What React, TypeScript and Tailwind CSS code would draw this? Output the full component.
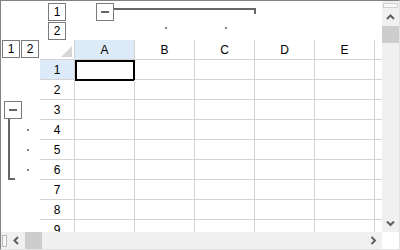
import React from 'react';

const columns = ['A', 'B', 'C', 'D', 'E', ''];
const rows = [1, 2, 3, 4, 5, 6, 7, 8, 9];
const detailRows = [4, 5, 6];

const LevelButton: React.FC<{ label: string }> = ({ label }) => (
  <div className="w-[18px] h-[18px] shrink-0 border border-[#7a7a7a] bg-white flex items-center justify-center leading-none">
    {label}
  </div>
);

const MinusButton: React.FC<{ className: string }> = ({ className }) => (
  <div className={`absolute w-[18px] h-[18px] border border-[#7a7a7a] bg-white flex items-center justify-center ${className}`}>
    <div className="w-[8px] h-[2px] bg-[#666]" />
  </div>
);

const Chevron: React.FC<{ dir: 'up' | 'down' | 'left' | 'right' }> = ({ dir }) => {
  const points = {
    up: '1,5 4.5,1.5 8,5',
    down: '1,1.5 4.5,5 8,1.5',
    left: '5,1 1.5,4.5 5,8',
    right: '1.5,1 5,4.5 1.5,8',
  }[dir];
  const size = dir === 'up' || dir === 'down' ? { w: 9, h: 7 } : { w: 7, h: 9 };
  return (
    <svg width={size.w} height={size.h} viewBox={`0 0 ${size.w} ${size.h}`}>
      <polyline points={points} fill="none" stroke="#606060" strokeWidth="2" />
    </svg>
  );
};

export default function App() {
  return (
    <div className="w-[400px] h-[250px] flex flex-col border-l border-t border-r border-b border-l-[#828282] border-t-[#828282] border-r-[#e3e3e3] border-b-[#e3e3e3] bg-white font-['Liberation_Sans',Arial,sans-serif] text-[12px] text-black">
      <div className="flex h-[231px]">
        {/* 시트 영역 */}
        <div className="relative w-[381px] h-[231px] overflow-hidden">
          {/* 열 윤곽 */}
          <div className="relative h-[39px]">
            <div className="absolute left-[47px] top-[2px] flex flex-col gap-px">
              <LevelButton label="1" />
              <LevelButton label="2" />
            </div>
            <MinusButton className="left-[95px] top-[2px]" />
            <svg className="absolute left-[113px] top-[7px]" width="142" height="6">
              <rect x="0" y="0" width="142" height="2" fill="#666" />
              <rect x="140" y="0" width="2" height="6" fill="#666" />
            </svg>
            <div className="absolute left-[164px] top-[26px] w-[2px] h-[2px] bg-[#808080]" />
            <div className="absolute left-[224px] top-[26px] w-[2px] h-[2px] bg-[#808080]" />
          </div>

          {/* 열 머리글 */}
          <div className="flex h-[20px]">
            <div className="w-[39px] shrink-0 flex gap-px pl-px">
              <LevelButton label="1" />
              <LevelButton label="2" />
            </div>
            <div className="w-[35px] shrink-0 border-r border-b border-[#d4d4d4] flex items-end justify-end pr-[2px] pb-[2px]">
              <svg width="11" height="11">
                <polygon points="11,0 11,11 0,11" fill="#d6d6d6" />
              </svg>
            </div>
            {columns.map((c, i) => (
              <div
                key={i}
                className={`w-[60px] shrink-0 border-r border-b border-[#d4d4d4] flex items-center justify-center ${c === 'A' ? 'bg-[#dcebf7]' : ''}`}
              >
                {c}
              </div>
            ))}
          </div>

          {/* 행 */}
          {rows.map((r) => (
            <div key={r} className="flex h-[20px]">
              <div className="w-[39px] shrink-0 flex items-center">
                {detailRows.includes(r) && <div className="ml-[26px] w-[2px] h-[2px] bg-[#808080]" />}
              </div>
              <div
                className={`w-[35px] shrink-0 border-r border-b border-[#d4d4d4] flex items-center justify-center ${r === 1 ? 'bg-[#dcebf7]' : ''}`}
              >
                {r}
              </div>
              {columns.map((c, i) => (
                <div key={i} className="relative w-[60px] shrink-0 border-r border-b border-[#d4d4d4]">
                  {r === 1 && c === 'A' && (
                    <div className="absolute left-0 top-0 w-[60px] h-[21px] border-2 border-black" />
                  )}
                </div>
              ))}
            </div>
          ))}

          {/* 행 윤곽 */}
          <MinusButton className="left-[3px] top-[100px]" />
          <svg className="absolute left-[7px] top-[118px]" width="7" height="61">
            <rect x="0" y="0" width="2" height="61" fill="#666" />
            <rect x="0" y="59" width="7" height="2" fill="#666" />
          </svg>
        </div>

        {/* 세로 스크롤바 */}
        <div className="w-[17px] h-[231px] bg-[#f0f0f0] flex flex-col items-center">
          <div className="mt-[2px] w-[15px] h-[5px] border border-[#d0d0d0] bg-[#f8f8f8]" />
          <div className="h-[18px] w-full flex items-center justify-center">
            <Chevron dir="up" />
          </div>
          <div className="h-[17px] w-full bg-[#cdcdcd]" />
          <div className="flex-1" />
          <div className="h-[17px] w-full flex items-center justify-center">
            <Chevron dir="down" />
          </div>
        </div>
      </div>

      <div className="flex h-[17px]">
        {/* 가로 스크롤바 */}
        <div className="w-[381px] h-[17px] bg-[#f0f0f0] flex items-center">
          <div className="ml-px w-[5px] h-[12px] border border-[#b8b8b8] bg-[#f8f8f8]" />
          <div className="w-[18px] h-full flex items-center justify-center">
            <Chevron dir="left" />
          </div>
          <div className="w-[17px] h-full bg-[#cdcdcd]" />
          <div className="flex-1" />
          <div className="w-[17px] h-full flex items-center justify-center">
            <Chevron dir="right" />
          </div>
        </div>
        <div className="w-[17px] h-[17px] bg-white" />
      </div>
    </div>
  );
}
